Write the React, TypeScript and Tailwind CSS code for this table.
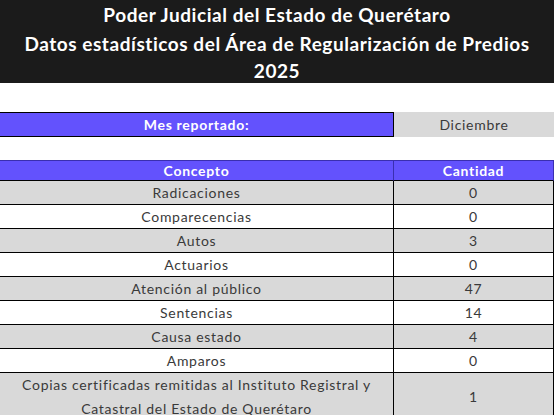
const rows: [string, string][] = [
  ["Radicaciones", "0"],
  ["Comparecencias", "0"],
  ["Autos", "3"],
  ["Actuarios", "0"],
  ["Atención al público", "47"],
  ["Sentencias", "14"],
  ["Causa estado", "4"],
  ["Amparos", "0"],
];

function App() {
  return (
    <div className="w-[554px] h-[415px] overflow-hidden bg-white font-['Lato',sans-serif] text-[#3a3a3a]">
      <div className="h-[83px] bg-[#1b1b1b] text-white font-bold text-[19px] tracking-[0.55px] text-center pt-[1px]">
        <div className="leading-[28px]">Poder Judicial del Estado de Querétaro</div>
        <div className="leading-[30px]">Datos estadísticos del Área de Regularización de Predios</div>
        <div className="leading-[24px]">2025</div>
      </div>

      <div className="mt-[29px] flex h-[25px] text-[14px] tracking-[0.7px]">
        <div className="w-[394px] bg-[#6352fd] border-y border-r border-black text-white font-bold flex items-center justify-center">
          Mes reportado:
        </div>
        <div className="flex-1 bg-[#d9d9d9] flex items-center justify-center">Diciembre</div>
      </div>

      <div className="mt-[23px] w-[554px] text-[14px] tracking-[0.7px]">
        <div className="flex h-[21px] bg-[#6352fd] text-white font-bold border-t border-[#3a2fb0]">
          <div className="w-[394px] border-r border-[#3a2fb0] border-b-black border-b flex items-center justify-center">Concepto</div>
          <div className="w-[160px] border-r border-[#3a2fb0] border-b border-b-black flex items-center justify-center">Cantidad</div>
        </div>
        {rows.map(([c, n], i) => (
          <div key={c} className={`flex h-[24px] border-b border-black ${i % 2 === 0 ? "bg-[#d9d9d9]" : "bg-white"}`}>
            <div className="w-[394px] border-r border-black flex items-center justify-center">{c}</div>
            <div className="w-[160px] border-r border-black flex items-center justify-center">{n}</div>
          </div>
        ))}
        <div className="flex h-[48px] bg-[#d9d9d9] leading-[24px]">
          <div className="w-[394px] border-r border-black flex items-center justify-center text-center">
            Copias certificadas remitidas al Instituto Registral y<br />Catastral del Estado de Querétaro
          </div>
          <div className="w-[160px] border-r border-black flex items-center justify-center">1</div>
        </div>
      </div>
    </div>
  );
}

export default App;
